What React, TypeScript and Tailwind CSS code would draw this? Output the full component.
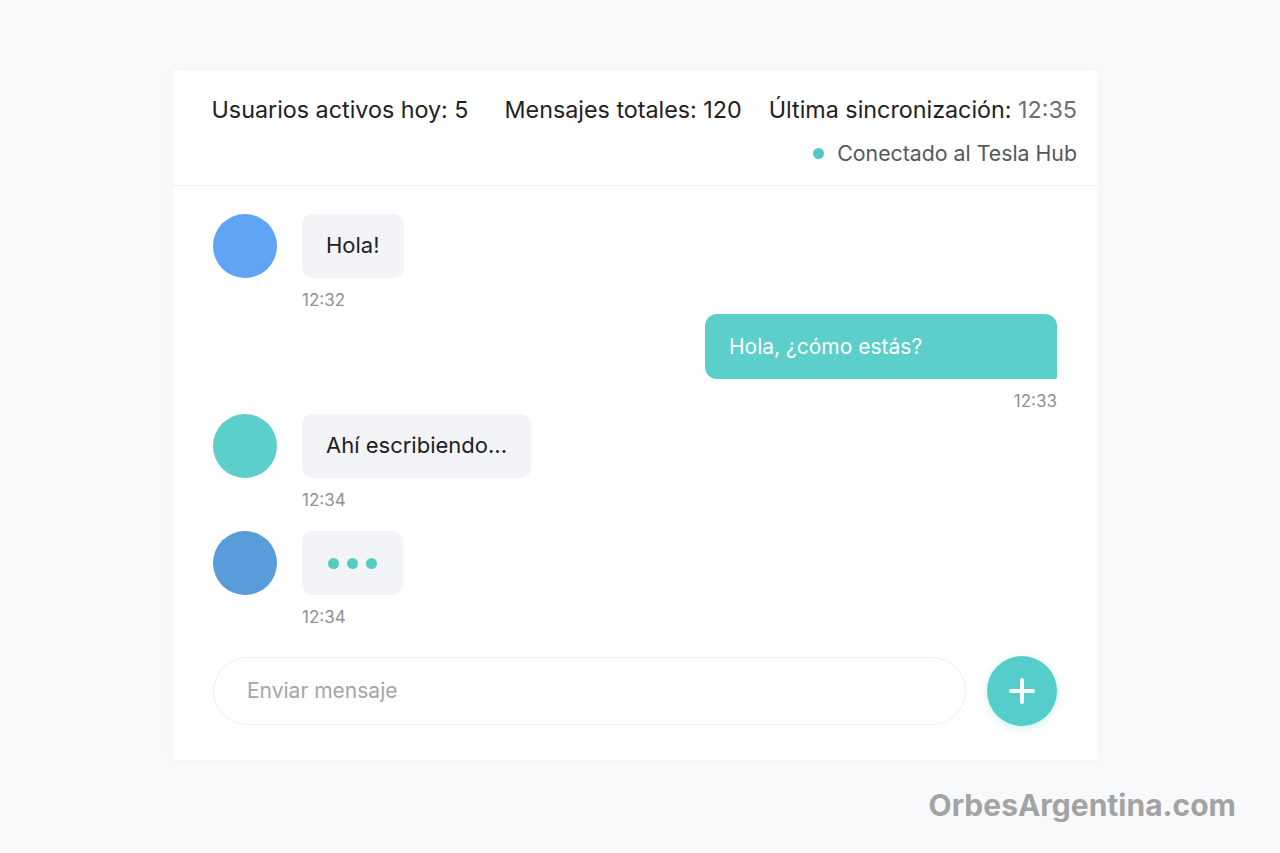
import React from 'react';

const FONT = { fontFamily: 'Inter, "Noto Sans", sans-serif' };

interface Msg {
  id: number;
  side: 'left' | 'right';
  avatar?: string;
  text?: string;
  typing?: boolean;
  time: string;
}

const messages: Msg[] = [
  { id: 1, side: 'left', avatar: 'bg-[#60a5f5]', text: 'Hola!', time: '12:32' },
  { id: 2, side: 'right', text: 'Hola, ¿cómo estás?', time: '12:33' },
  { id: 3, side: 'left', avatar: 'bg-[#5ccfca]', text: 'Ahí escribiendo...', time: '12:34' },
  { id: 4, side: 'left', avatar: 'bg-[#5a9bd9]', typing: true, time: '12:34' },
];

function LeftMessage({ msg }: { msg: Msg }) {
  return (
    <div className="flex gap-[25px]">
      <div className={`h-16 w-16 shrink-0 rounded-full ${msg.avatar}`} />
      <div className="flex flex-col items-start">
        <div className="flex h-16 items-center rounded-[10px] bg-[#f3f4f7] px-6 text-[22px] text-[#1f2023]">
          {msg.typing ? (
            <div className="flex gap-2 px-[2px]">
              <span className="h-[11px] w-[11px] rounded-full bg-[#56cbbf]" />
              <span className="h-[11px] w-[11px] rounded-full bg-[#56cbbf]" />
              <span className="h-[11px] w-[11px] rounded-full bg-[#56cbbf]" />
            </div>
          ) : (
            msg.text
          )}
        </div>
        <span className="mt-[10px] text-[17px] text-[#8e9196]">{msg.time}</span>
      </div>
    </div>
  );
}

function RightMessage({ msg }: { msg: Msg }) {
  return (
    <div className="flex flex-col items-end">
      <div className="flex h-[65px] w-[352px] items-center rounded-[12px] rounded-br-[2px] bg-[#5ccfcb] px-6 text-[21px] text-white">
        {msg.text}
      </div>
      <span className="mt-[10px] text-[17px] text-[#8e9196]">{msg.time}</span>
    </div>
  );
}

export default function App() {
  return (
    <div className="relative min-h-[853px] w-full bg-[#f8f9fb]" style={FONT}>
      <div className="flex justify-center pt-[70px] pr-[9px]">
        <div className="w-[925px] bg-white shadow-[0_0_12px_rgba(0,0,0,0.03)]">
          {/* Header */}
          <div className="flex flex-col items-end border-b border-[#eef0f2] pb-[15px] pl-[20px] pr-[21px] pt-[23px]">
            <div className="flex items-center whitespace-nowrap text-[23.3px] text-[#1f2124]">
              <span>Usuarios activos hoy: 5</span>
              <span className="ml-[36px]">Mensajes totales: 120</span>
              <span className="ml-[27px]">
                Última sincronización: <span className="text-[#6b6e73]">12:35</span>
              </span>
            </div>
            <div className="mt-[10px] flex items-center gap-[13px] whitespace-nowrap text-[21.3px] text-[#55585d]">
              <span className="h-[11px] w-[11px] rounded-full bg-[#52c9c4]" />
              <span>Conectado al Tesla Hub</span>
            </div>
          </div>

          {/* Messages */}
          <div className="flex flex-col pl-[40px] pr-[41px] pt-[28px]">
            <LeftMessage msg={messages[0]} />
            <div className="mt-[1px]">
              <RightMessage msg={messages[1]} />
            </div>
            <div className="-mt-[1px]">
              <LeftMessage msg={messages[2]} />
            </div>
            <div className="mt-[18px]">
              <LeftMessage msg={messages[3]} />
            </div>
          </div>

          {/* Composer */}
          <div className="flex items-center gap-[21px] pb-[34px] pl-[40px] pr-[41px] pt-[25px]">
            <div className="flex h-[68px] flex-1 items-center rounded-full border border-[#eeeff1] px-[33px] text-[21px] text-[#a3a6ab]">
              Enviar mensaje
            </div>
            <button
              type="button"
              className="flex h-[70px] w-[70px] shrink-0 items-center justify-center rounded-full bg-[#55cdca] shadow-[0_2px_8px_rgba(85,205,202,0.3)]"
            >
              <svg width="28" height="28" viewBox="0 0 28 28" fill="none">
                <path d="M14 3v22M3 14h22" stroke="white" strokeWidth="4" strokeLinecap="round" />
              </svg>
            </button>
          </div>
        </div>
      </div>

      <div className="absolute right-[44px] top-[783px] text-[30px] font-bold text-[#a3a3a3]">
        OrbesArgentina.com
      </div>
    </div>
  );
}
